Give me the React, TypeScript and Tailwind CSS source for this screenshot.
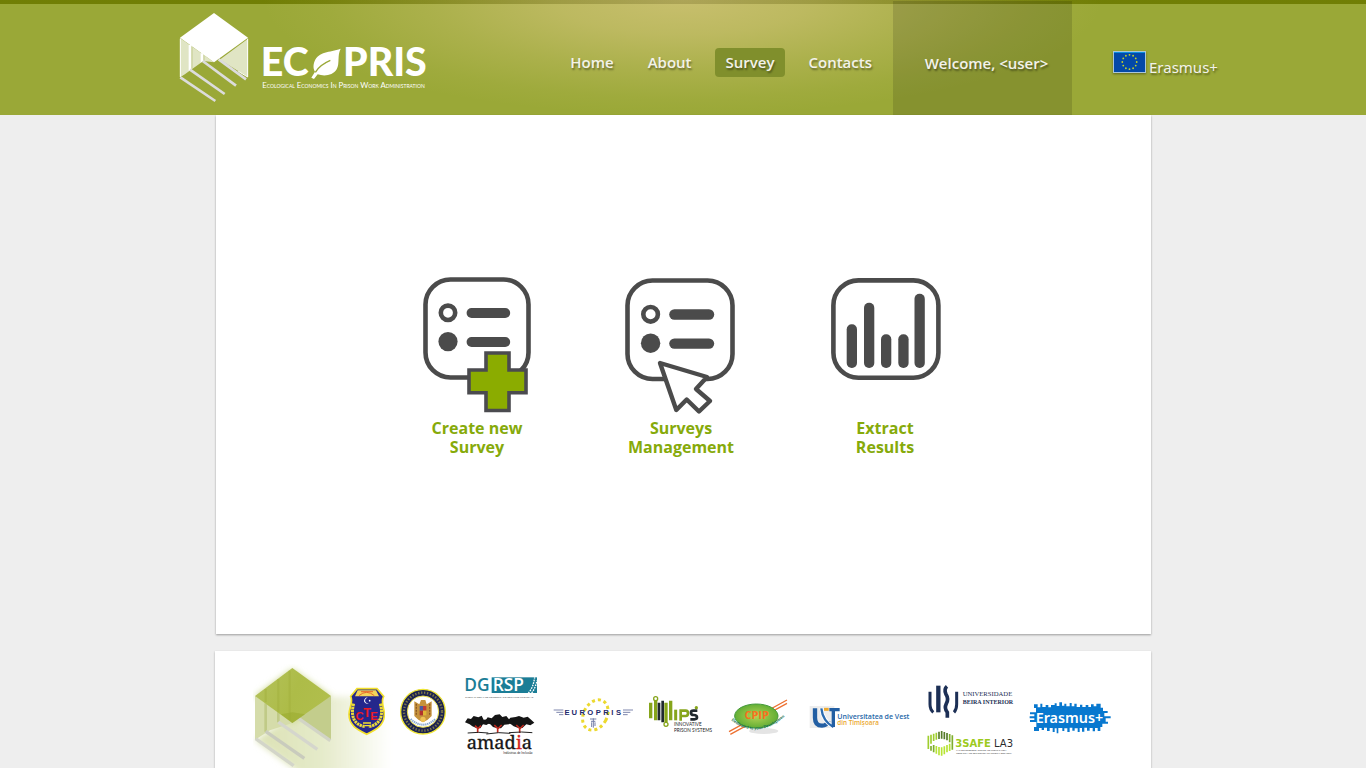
import React from 'react';

const navItems = [
  { label: 'Home', active: false },
  { label: 'About', active: false },
  { label: 'Survey', active: true },
  { label: 'Contacts', active: false },
];

function BrandLogo() {
  return (
    <svg className="h-[92px] w-[252px]" viewBox="27 36 756 276" role="img" aria-label="ECOPRIS">
      <g fill="#e0e5c4">
        <path d="M30 114 L132 187 L30 231Z" />
        <path d="M234 116 V231 L148 180Z" />
      </g>
      <path d="M60 135 V212 M96 160 V190" stroke="#fff" strokeWidth="8" />
      <path d="M66 140 V206 M102 165 V182" stroke="#c3cb8d" strokeWidth="3" />
      <path d="M31 116 V231 M233 116 V231 L150 181" stroke="#fff" strokeWidth="3" fill="none" />
      <path d="M32 232 L100 183 L132 187 L148 178 L206 214 L180 232 L132 250 L80 262Z" fill="#9aa837" />
      <g stroke="#dcdcdc" strokeWidth="8" fill="none">
        <path d="M31 232 L136 303" />
        <path d="M60 209 L164 282" />
        <path d="M98 183 L198 257" />
        <path d="M146 178 L228 238" />
      </g>
      <path d="M132 39 L234 113 L132 187 L30 113Z" fill="#fff" />
      <g fill="#fff" fontFamily="Lato, sans-serif">
        <text x="272" y="227" fontSize="118" fontWeight="900">EC</text>
        <text x="519" y="227" fontSize="118" fontWeight="900">PRIS</text>
        <text x="277" y="263" fontSize="23.4" style={{ fontVariant: 'small-caps' }}>
          Ecological Economics In Prison Work Administration
        </text>
      </g>
      <path d="M512 146 C478 158 446 154 434 183 C428 198 431 209 435 215 L424 233 L432 237 L443 223 C462 230 489 227 500 208 C510 190 501 167 512 146Z" fill="#fff" />
      <path d="M436 217 C446 199 460 190 481 181" stroke="#9aa837" strokeWidth="4" fill="none" />
    </svg>
  );
}

function EuFlag() {
  const stars = Array.from({ length: 12 }, (_, i) => {
    const a = (i * Math.PI) / 6;
    return { x: 17 + 7.2 * Math.sin(a), y: 11 - 7.2 * Math.cos(a) };
  });
  return (
    <svg className="h-[23px] w-[34px] drop-shadow-[0_1px_1px_rgba(0,0,0,0.4)]" viewBox="0 0 34 23" aria-hidden="true">
      <rect x="0.5" y="0.5" width="32" height="21" fill="#0349a8" stroke="#a9c6d8" />
      <path d="M1 1.5 H32" stroke="#0a8fe0" />
      {stars.map((s, i) => (
        <circle key={i} cx={s.x - 0.5} cy={s.y} r="0.9" fill="#c3d22a" />
      ))}
    </svg>
  );
}

function CreateIcon() {
  return (
    <svg className="h-[140px] w-28" viewBox="0 0 112 140" aria-hidden="true">
      <rect x="4.5" y="4.5" width="103" height="98" rx="25" fill="none" stroke="#4b4b4b" strokeWidth="4.6" />
      <circle cx="27" cy="37.8" r="7.2" fill="none" stroke="#4b4b4b" strokeWidth="4.6" />
      <circle cx="27" cy="66.6" r="9.6" fill="#4b4b4b" />
      <rect x="45.6" y="33" width="43.6" height="10" rx="5" fill="#4b4b4b" />
      <rect x="45.6" y="62" width="43.6" height="10" rx="5" fill="#4b4b4b" />
      <path d="M65 78 H88 V95 H105 V117.7 H88 V135.5 H65 V117.7 H48 V95 H65Z" fill="#8bac00" stroke="#4b4b4f" strokeWidth="3.6" />
    </svg>
  );
}

function ManageIcon() {
  return (
    <svg className="h-[140px] w-28" viewBox="0 0 112 140" aria-hidden="true">
      <rect x="2.5" y="5.5" width="105" height="98.5" rx="25" fill="none" stroke="#4b4b4b" strokeWidth="4.6" />
      <circle cx="25.6" cy="39.3" r="7.3" fill="none" stroke="#4b4b4b" strokeWidth="4.6" />
      <circle cx="25.6" cy="68.2" r="9.7" fill="#4b4b4b" />
      <rect x="44.2" y="34.3" width="45" height="10.4" rx="5.2" fill="#4b4b4b" />
      <rect x="44.2" y="63.4" width="45" height="10.4" rx="5.2" fill="#4b4b4b" />
      <path d="M35 88 L82 102 L71 114 L85 126 L74 136.5 L61.7 124.5 L51.3 135Z" fill="#fff" stroke="#4b4b4b" strokeWidth="4.4" strokeLinejoin="round" />
    </svg>
  );
}

function ResultsIcon() {
  return (
    <svg className="h-[140px] w-28" viewBox="0 0 112 140" aria-hidden="true">
      <rect x="4.4" y="5.4" width="105" height="97.3" rx="25" fill="none" stroke="#4b4b4b" strokeWidth="4.6" />
      <g fill="#4b4b4b">
        <rect x="17.7" y="49.3" width="10.3" height="43.7" rx="5" />
        <rect x="35" y="27.7" width="10.3" height="65.3" rx="5" />
        <rect x="52" y="59.3" width="10.3" height="33.7" rx="5" />
        <rect x="69.3" y="59.3" width="10.3" height="33.7" rx="5" />
        <rect x="85.5" y="18.7" width="10.3" height="74.3" rx="5" />
      </g>
    </svg>
  );
}

function FooterCube() {
  return (
    <svg className="-mr-[45px] h-[104px] w-[140px] shrink-0 self-end" viewBox="144 117 420 312" aria-hidden="true">
      <defs>
        <linearGradient id="haze" x1="0" x2="1">
          <stop offset="0" stopColor="#dbe2b4" />
          <stop offset="0.5" stopColor="#dbe2b4" stopOpacity="0.7" />
          <stop offset="1" stopColor="#dbe2b4" stopOpacity="0" />
        </linearGradient>
        <linearGradient id="roof" x1="0" y1="0" x2="1" y2="0.3">
          <stop offset="0" stopColor="#b4c25c" />
          <stop offset="0.6" stopColor="#adbc48" />
          <stop offset="1" stopColor="#b0be4c" />
        </linearGradient>
        <filter id="soft" x="-20%" y="-20%" width="140%" height="140%">
          <feGaussianBlur stdDeviation="9" />
        </filter>
      </defs>
      <path d="M262 270 L378 215 H560 V450 H290 L150 345Z" fill="url(#haze)" filter="url(#soft)" />
      <path d="M262 132 L378 213 L262 294 L150 213Z" fill="#cbd68b" filter="url(#soft)" />
      <path d="M150 213 V344 L262 262Z" fill="#dde4bc" />
      <path d="M150 213 L262 294 L195 316 L150 344Z" fill="#d5dcaa" />
      <path d="M378 213 V345 L262 268Z" fill="#c3cd8c" />
      <path d="M182 235 V320 M220 262 V292" stroke="#c0ca87" strokeWidth="8" />
      <g fill="none" strokeWidth="10">
        <path d="M152 341 L266 422" stroke="#d3d5c9" />
        <path d="M182 319 L298 400" stroke="#c9cbbd" />
        <path d="M220 291 L337 373" stroke="#d5d6cd" />
        <path d="M260 266 L376 347" stroke="#d2d4c6" />
      </g>
      <path d="M262 129 L378 213 L262 294 L150 213Z" fill="url(#roof)" />
      <path d="M182 192 V232 M220 162 V262 M254 137 V285" stroke="#a3b13e" strokeWidth="7" opacity="0.5" />
      <path d="M262 262 L300 268 L262 294 L228 268Z" fill="#9bac30" opacity="0.6" />
    </svg>
  );
}

function CteBadge() {
  return (
    <svg className="h-[58px] w-[37px] shrink-0" viewBox="429 186 111 174" role="img" aria-label="CTE">
      <path d="M456 191 H516 L536 214 C526 232 538 248 538 268 C538 300 516 312 485 328 C454 312 432 300 432 268 C432 248 446 232 437 214Z" fill="#25278c" stroke="#f2df2c" strokeWidth="5" />
      <path d="M458 196 H513 L522 214 H450Z" fill="#f3d45a" />
      <path d="M462 212 Q485 192 508 212 M468 200 H504" fill="none" stroke="#e8692e" strokeWidth="3" />
      <path d="M446 236 C436 272 446 300 481 305 M526 236 C536 272 526 300 490 305" fill="none" stroke="#e9d93a" strokeWidth="9" strokeDasharray="7 2" />
      <path d="M491 219 A9 9 0 1 0 493 233 A8 8 0 1 1 491 219Z" fill="#fff" />
      <circle cx="494" cy="227" r="2.5" fill="#fff" />
      <g fill="#ee1c25" fontFamily="'Liberation Sans', sans-serif" fontWeight="700" textAnchor="middle">
        <text x="464" y="286" fontSize="34">C</text>
        <text x="486" y="275" fontSize="38">T</text>
        <text x="507" y="286" fontSize="34">E</text>
      </g>
      <path d="M474 294 H498 M480 302 H492" stroke="#f2df2c" strokeWidth="4" />
    </svg>
  );
}

function MinistryBadge() {
  return (
    <svg className="h-[58px] w-[51px] shrink-0" viewBox="579 186 153 174" role="img" aria-label="Ministerul Justitiei">
      <circle cx="651" cy="260" r="67" fill="#1d2450" stroke="#efe636" strokeWidth="4" />
      <circle cx="651" cy="260" r="57" fill="none" stroke="#7f7a48" strokeWidth="7" strokeDasharray="4 5" />
      <circle cx="651" cy="260" r="47" fill="#fff" stroke="#e9de4d" strokeWidth="3" />
      <path d="M625 229 L640 238 L645 225 H658 L662 238 L677 229 V273 L665 284 L651 292 L637 284 L625 273Z" fill="#c5923c" />
      <path d="M631 236 V270 M671 236 V270" stroke="#8c5a26" strokeWidth="4" strokeDasharray="6 3" />
      <rect x="641" y="243" width="10" height="14" fill="#4a5ba0" />
      <rect x="651" y="243" width="10" height="14" fill="#c23a34" />
      <rect x="641" y="257" width="10" height="14" fill="#b2332d" />
      <rect x="651" y="257" width="10" height="14" fill="#dfb636" />
      <circle cx="651" cy="283" r="8" fill="#efc355" />
      <path d="M614 282 Q651 316 688 282" fill="none" stroke="#86a7cf" strokeWidth="6" strokeDasharray="4 2" />
    </svg>
  );
}

function DgrspLogo() {
  return (
    <svg className="h-[25px] w-[75px]" viewBox="39 30 225 75" role="img" aria-label="DGRSP">
      <rect x="122" y="37" width="136" height="47" fill="#1b7d96" />
      <g fontFamily="'Open Sans', sans-serif" fontSize="52" fontWeight="600">
        <text x="40" y="79" fill="#1b7d96">DG</text>
        <text x="125" y="79" fill="#fff">RSP</text>
      </g>
      <path d="M232 84 Q247 68 251 37 M242 84 Q254 68 258 46" stroke="#fff" strokeWidth="4" strokeDasharray="5 3" fill="none" />
      <text x="43" y="98" fontSize="7" fill="#555" fontFamily="'Liberation Sans', sans-serif">DIREÇÃO-GERAL DE REINSERÇÃO E SERVIÇOS PRISIONAIS</text>
    </svg>
  );
}

function AmadiaLogo() {
  return (
    <svg className="h-[45px] w-[72px]" viewBox="45 141 216 135" role="img" aria-label="amadia">
      <g fill="#151515">
        <path d="M48 172 L56 160 L66 162 L74 153 L88 157 L98 152 L104 164 L118 163 L124 173 L112 180 L102 178 L94 190 L80 188 L70 184 L62 178Z" />
        <path d="M106 172 L116 157 L128 160 L138 150 L152 148 L160 156 L172 153 L180 163 L190 168 L180 178 L166 179 L156 190 L140 188 L132 186 L124 178Z" />
        <path d="M172 172 L184 158 L200 156 L210 153 L224 158 L236 155 L248 166 L256 173 L244 181 L232 178 L220 189 L206 188 L194 184 L186 178Z" />
      </g>
      <g stroke="#c02a1f" strokeWidth="5" fill="none">
        <path d="M86 204 V190 L78 182 M86 192 L96 182" />
        <path d="M146 203 V190 L136 180 M146 192 L158 180" />
        <path d="M212 204 V190 L202 180 M212 192 L224 180" />
      </g>
      <path d="M56 204 Q90 200 118 204 M112 207 Q150 200 184 205 M180 203 Q220 199 250 203" stroke="#222" strokeWidth="3" fill="none" />
      <text x="53" y="252" fontSize="55" fill="#151515" stroke="#151515" strokeWidth="1" fontFamily="'Noto Serif', 'DejaVu Serif', serif">
        amad<tspan fill="#d21f1f" stroke="#d21f1f">i</tspan>a
      </text>
      <text x="163" y="267" fontSize="9" fill="#222" fontFamily="'Liberation Sans', sans-serif">Indústrias de Inclusão</text>
    </svg>
  );
}

function EuroprisLogo() {
  return (
    <svg className="h-10 w-[81px] shrink-0" viewBox="309 93 243 120" role="img" aria-label="EUROPRIS">
      <ellipse cx="436" cy="150" rx="35" ry="48" transform="rotate(28 436 150)" fill="none" stroke="#ecd92f" strokeWidth="9" strokeDasharray="9 9" />
      <path d="M311 135 H340 M319 142 H340 M327 149 H340 M519 135 H549 M519 142 H541 M519 149 H533" stroke="#7e86ad" strokeWidth="3" />
      <g fill="#1f2b6c" fontFamily="'Liberation Sans', sans-serif" fontWeight="700" fontSize="23" textAnchor="middle">
        <text x="351" y="151">E</text>
        <text x="373" y="151">U</text>
        <text x="397" y="151">R</text>
        <text x="421" y="151">O</text>
        <text x="445" y="151">P</text>
        <text x="468" y="151">R</text>
        <text x="487" y="151">I</text>
        <text x="506" y="151">S</text>
      </g>
      <path d="M420 162 H439 M423 169 H436 M425 172 V186 M430 160 V188 M435 172 V183" stroke="#7680a9" strokeWidth="3" />
    </svg>
  );
}

function IpsLogo() {
  return (
    <svg className="h-11 w-[66px] shrink-0" viewBox="24 87 198 132" role="img" aria-label="IPS Innovative Prison Systems">
      <g strokeWidth="8">
        <path d="M32 113 V160 M47 108 V166 M78 113 V172 M92 107 V166" stroke="#86a51b" strokeWidth="10" />
        <path d="M57 113 V166 M68 107 V172" stroke="#20292f" />
      </g>
      <circle cx="47" cy="101" r="6" fill="#fff" stroke="#86a51b" strokeWidth="4" />
      <circle cx="78" cy="178" r="6" fill="#fff" stroke="#86a51b" strokeWidth="4" />
      <path d="M107 134 V166" stroke="#86a51b" strokeWidth="9" />
      <path d="M122 167 V137 H137 Q144 137 144 145 Q144 153 137 153 H126" stroke="#86a51b" strokeWidth="8" fill="none" />
      <path d="M172 137 H160 Q153 137 153 143 Q153 150 161 150 Q171 150 171 157 Q171 163 163 163 H151" stroke="#20292f" strokeWidth="8" fill="none" />
      <circle cx="169" cy="128" r="5" fill="#86a51b" />
      <g fill="#252525" fontFamily="Lato, 'Liberation Sans', sans-serif" fontSize="14">
        <text x="102" y="183">INNOVATIVE</text>
        <text x="102" y="202">PRISON SYSTEMS</text>
      </g>
    </svg>
  );
}

function CpipLogo() {
  return (
    <svg className="h-[38px] w-[66px] shrink-0" viewBox="261 96 198 114" role="img" aria-label="CPIP Dedicated to your Development">
      <defs>
        <radialGradient id="leaf">
          <stop offset="0" stopColor="#b5d455" />
          <stop offset="1" stopColor="#63ae35" />
        </radialGradient>
        <path id="motto" d="M271 166 Q345 226 430 156" />
      </defs>
      <ellipse cx="368" cy="198" rx="44" ry="9" fill="#e4e4e4" />
      <path d="M264 200 L438 105 M268 208 L438 115" stroke="#ed7131" strokeWidth="4" />
      <ellipse cx="346" cy="153" rx="65" ry="36" fill="url(#leaf)" stroke="#449a3a" strokeWidth="3" />
      <text x="347" y="163" textAnchor="middle" fontSize="33" fontWeight="700" fill="#f9701f" fontFamily="'Open Sans', sans-serif">CPIP</text>
      <text fontSize="12" fontWeight="700" fill="#12704f" fontFamily="'Liberation Sans', sans-serif">
        <textPath href="#motto">Dedicated to your Development</textPath>
      </text>
    </svg>
  );
}

function UvtLogo() {
  return (
    <svg className="h-6 w-[105px] shrink-0" viewBox="36 117 315 72" role="img" aria-label="Universitatea de Vest din Timișoara">
      <rect x="41" y="123" width="74" height="69" fill="#ededed" />
      <path d="M57 130 V158 Q57 182 78 182 Q92 182 98 168" stroke="#235fa3" strokeWidth="13" fill="none" />
      <path d="M76 130 Q80 168 112 186" stroke="#fff" strokeWidth="12" fill="none" />
      <path d="M76 130 Q80 168 112 186" stroke="#2a6bb0" strokeWidth="7" fill="none" />
      <path d="M100 134 H131 M112 134 V186" stroke="#235fa3" strokeWidth="10" />
      <path d="M84 133 H98" stroke="#eda92e" strokeWidth="9" />
      <g fontFamily="'Open Sans', sans-serif" fontWeight="600">
        <text x="124" y="162" fontSize="21" fill="#2667a8">Universitatea de Vest</text>
        <text x="124" y="180" fontSize="19" fill="#eba82e">din Timișoara</text>
      </g>
    </svg>
  );
}

function UbiLogo() {
  return (
    <svg className="h-11 w-[89px]" viewBox="393 30 267 132" role="img" aria-label="Universidade Beira Interior">
      <g fill="none" stroke="#1c2f55" strokeWidth="9">
        <path d="M402 80 V118 Q402 134 412 142" />
        <path d="M427 62 V142" strokeWidth="13" />
        <path d="M453 64 Q443 72 450 88 Q459 102 451 116 Q444 130 454 142 V158" strokeWidth="11" />
        <path d="M482 80 V118 Q482 134 474 142" />
      </g>
      <g fill="#1c2f55" fontFamily="'Liberation Serif', serif">
        <text x="500" y="94" fontSize="20">UNIVERSIDADE</text>
        <text x="500" y="118" fontSize="18" fontWeight="700">BEIRA INTERIOR</text>
      </g>
    </svg>
  );
}

function BsafeLogo() {
  return (
    <svg className="h-[27px] w-[89px]" viewBox="393 195 267 81" role="img" aria-label="BSAFELAB">
      <g strokeWidth="5" fill="none">
        <path d="M397 212 V252 M405 209 V236 M413 206 V228 M421 203 V224" stroke="#9fce2e" />
        <path d="M429 200 V222 M437 198 V221 M445 201 V223 M453 204 V226" stroke="#567b2a" />
        <path d="M461 207 V232 M469 211 V254 M405 243 V257 M413 240 V262" stroke="#7fae2c" />
        <path d="M421 243 V266 M429 246 V271 M437 247 V272 M445 244 V268 M453 240 V262 M461 236 V258" stroke="#b7e434" />
      </g>
      <g fontFamily="'DejaVu Sans', sans-serif" fontSize="30">
        <text x="478" y="247" fill="#9dca1c" fontWeight="700">3SAFE</text>
        <text x="594" y="247" fill="#2c2c2c">LA3</text>
      </g>
      <g fill="#333" fontFamily="'Liberation Sans', sans-serif" fontSize="6">
        <text x="481" y="258">LAW ENFORCEMENT, JUSTICE AND PUBLIC SAFETY</text>
        <text x="481" y="268">RESEARCH AND TECHNOLOGY TRANSFER LABORATORY</text>
      </g>
    </svg>
  );
}

function ErasmusLogo() {
  return (
    <svg className="-ml-[2px] h-9 w-[84px] shrink-0" viewBox="51 219 252 108" role="img" aria-label="Erasmus+">
      <path d="M69 238 H80 V247 H88 V236 H94 V246 H104 V240 H112 V247 H120 V240 H131 V235 H137 V243 H145 V232 H153 V242 H160 V236 H166 V244 H176 V234 H182 V244 H190 V236 H197 V246 H207 V239 H214 V246 H224 V240 H232 V246 H240 V238 H248 V244 H256 V236 H269 V248 H276 V258 H290 V264 H280 V274 H299 V280 H284 V290 H291 V296 H274 V306 H268 V318 H260 V309 H252 V319 H245 V309 H236 V317 H228 V308 H220 V320 H213 V309 H206 V321 H200 V310 H191 V317 H184 V308 H176 V321 H169 V310 H160 V318 H154 V309 H142 V325 H137 V310 H131 V321 H125 V309 H116 V318 H108 V308 H99 V315 H92 V309 H84 V318 H69 V306 H76 V291 H57 V285 H70 V280 H56 V274 H70 V268 H57 V262 H75 V249 H69Z" fill="#0878cf" />
      <text x="74" y="295" fontSize="43" fontWeight="600" fill="#fff" fontFamily="'Noto Sans', sans-serif">Erasmus+</text>
    </svg>
  );
}

const actions = [
  { first: 'Create new', second: 'Survey', Icon: CreateIcon },
  { first: 'Surveys', second: 'Management', Icon: ManageIcon },
  { first: 'Extract', second: 'Results', Icon: ResultsIcon },
];

export default function App() {
  return (
    <div className="flex min-h-screen flex-col bg-[#eeeeee] font-['Open_Sans',sans-serif]">
      <header className="bg-[#9aa837] bg-[linear-gradient(rgba(60,50,0,0.18)_4px,transparent_4px),radial-gradient(ellipse_420px_115px_at_50%_0,rgba(202,192,112,0.95),rgba(202,192,112,0.72)_30%,rgba(202,192,112,0.36)_60%,rgba(202,192,112,0.1)_85%,transparent),linear-gradient(#7c8f06_4px,transparent_4px)]">
        <div className="mx-auto flex h-[115px] max-w-[1074px] pl-[33px]">
          <a href="#home" className="mt-3 self-start">
            <BrandLogo />
          </a>
          <nav aria-label="Main" className="mr-[10px] ml-auto flex items-center gap-3 pt-[10px]">
            {navItems.map((item) => (
              <a
                key={item.label}
                href={`#${item.label.toLowerCase()}`}
                aria-current={item.active ? 'page' : undefined}
                className={
                  item.active
                    ? 'rounded bg-[#808f2c] px-[11px] text-[15px] leading-[29px] font-semibold text-[#f3f2ea] [text-shadow:1px_2px_2px_rgba(0,0,0,0.4)]'
                    : 'px-[11px] text-[15px] leading-[29px] font-semibold text-[#f3f2ea] [text-shadow:1px_2px_2px_rgba(0,0,0,0.4)]'
                }
              >
                {item.label}
              </a>
            ))}
          </nav>
          <div className="mt-px flex w-[179px] items-center justify-center bg-black/13 pt-[10px] pl-2 text-[15px] font-semibold text-[#f3f2ea] [text-shadow:1px_2px_2px_rgba(0,0,0,0.4)]">
            Welcome, &lt;user&gt;
          </div>
          <div className="flex w-[148px] items-start gap-[2px] pt-[51px] pl-[41px]">
            <EuFlag />
            <span className="pt-[6px] font-['Noto_Sans',sans-serif] text-[15px] leading-5 text-[#f3f2ea] [text-shadow:1px_2px_2px_rgba(0,0,0,0.4)]">
              Erasmus+
            </span>
          </div>
        </div>
      </header>

      <main className="mx-auto flex w-full max-w-[935px] flex-1 items-center justify-center bg-white pr-1 pb-[18px] shadow-[0_1px_2px_rgba(0,0,0,0.35)]">
        <div className="grid grid-cols-3">
          {actions.map(({ first, second, Icon }) => (
            <a
              key={second}
              href={`#${second.toLowerCase()}`}
              className="flex w-[204px] flex-col items-center gap-1 text-center text-base leading-[19px] font-bold text-[#86aa0a]"
            >
              <Icon />
              <span>
                {first}
                <br />
                {second}
              </span>
            </a>
          ))}
        </div>
      </main>

      <footer className="mx-auto mt-[17px] flex h-[117px] w-full max-w-[936px] items-center gap-[14px] overflow-hidden bg-white pt-[13px] pl-[38px] shadow-[0_1px_2px_rgba(0,0,0,0.3)]">
        <FooterCube />
        <div className="-ml-[14px] flex shrink-0 items-center gap-[14px]">
          <CteBadge />
          <MinistryBadge />
        </div>
        <div className="flex shrink-0 flex-col gap-3">
          <DgrspLogo />
          <AmadiaLogo />
        </div>
        <EuroprisLogo />
        <IpsLogo />
        <CpipLogo />
        <UvtLogo />
        <div className="flex shrink-0 flex-col gap-[11px]">
          <UbiLogo />
          <BsafeLogo />
        </div>
        <ErasmusLogo />
      </footer>
    </div>
  );
}
